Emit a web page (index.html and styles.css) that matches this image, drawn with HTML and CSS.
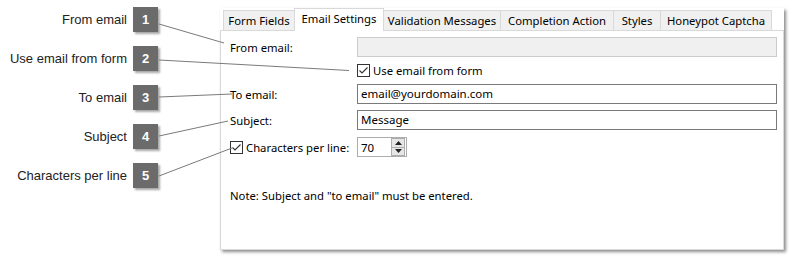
FILE: index.html
```html
<!doctype html>
<html>
<head>
<meta charset="utf-8">
<title>Email Settings</title>
<link rel="stylesheet" href="styles.css">
</head>
<body>
<div class="page">
	<div class="callouts">
		<div class="callout"><span class="callout-text">From email</span><span class="badge">1</span></div>
		<div class="callout"><span class="callout-text">Use email from form</span><span class="badge">2</span></div>
		<div class="callout"><span class="callout-text">To email</span><span class="badge">3</span></div>
		<div class="callout"><span class="callout-text">Subject</span><span class="badge">4</span></div>
		<div class="callout"><span class="callout-text">Characters per line</span><span class="badge">5</span></div>
	</div>

	<div class="window">
		<ul class="tabs">
			<li class="tab t-fields">Form Fields</li>
			<li class="tab t-email on">Email Settings</li>
			<li class="tab t-valid">Validation Messages</li>
			<li class="tab t-compl">Completion Action</li>
			<li class="tab t-styles">Styles</li>
			<li class="tab t-honey">Honeypot Captcha</li>
		</ul>
		<div class="panel">
			<div class="row">
				<label class="label">From email:</label>
				<div class="field disabled"></div>
			</div>
			<div class="row row-check">
				<span class="label"></span>
				<span class="check">
					<svg width="13" height="13" viewBox="0 0 13 13"><rect x="0.5" y="0.5" width="12" height="12" fill="#fff" stroke="#333"/><path d="M2.5 6.5 L5 9 L10.5 3.5" fill="none" stroke="#333" stroke-width="1.1"/></svg>
					Use email from form
				</span>
			</div>
			<div class="row">
				<label class="label">To email:</label>
				<div class="field">email@yourdomain.com</div>
			</div>
			<div class="row row-subject">
				<label class="label">Subject:</label>
				<div class="field">Message</div>
			</div>
			<div class="row">
				<span class="label check">
					<svg width="13" height="13" viewBox="0 0 13 13"><rect x="0.5" y="0.5" width="12" height="12" fill="#fff" stroke="#333"/><path d="M2.5 6.5 L5 9 L10.5 3.5" fill="none" stroke="#333" stroke-width="1.1"/></svg>
					Characters per line:
				</span>
				<div class="spin">
					<span class="spin-val">70</span>
					<span class="spin-btns">
						<span class="spin-btn"><svg width="7" height="4" viewBox="0 0 7 4"><path d="M0 4 L3.5 0 L7 4 Z" fill="#222"/></svg></span>
						<span class="spin-btn"><svg width="7" height="4" viewBox="0 0 7 4"><path d="M0 0 L3.5 4 L7 0 Z" fill="#222"/></svg></span>
					</span>
				</div>
			</div>
			<p class="note">Note: Subject and "to email" must be entered.</p>
		</div>
	</div>

	<svg class="leaders" width="794" height="261" viewBox="0 0 794 261">
		<g stroke="#7a7a7a" stroke-width="1" fill="none">
			<line x1="159" y1="24" x2="224" y2="43"/>
			<line x1="159" y1="60" x2="349" y2="70.5"/>
			<line x1="159" y1="97" x2="232" y2="94"/>
			<line x1="159" y1="136" x2="228" y2="121"/>
			<line x1="159" y1="176" x2="232" y2="148"/>
		</g>
	</svg>
</div>
</body>
</html>
```

FILE: styles.css
```css
*{margin:0; padding:0; list-style:none; box-sizing:border-box;}
body{background:#fff; width:794px; height:261px; overflow:hidden;}
.page{position:relative; display:flex; width:794px; height:261px;}

/* callouts on the left */
.callouts{width:220px; padding-top:7px; display:flex; flex-direction:column; gap:14px;}
.callout{display:flex; align-items:center; justify-content:flex-end; padding-right:62px; height:25px;}
.callout-text{font:13px "Liberation Sans", Arial, sans-serif; color:#222; margin-right:6px;}
.badge{width:25px; height:25px; background:#6b6b6b; color:#fff; font:bold 13px/25px "Liberation Sans", Arial, sans-serif; text-align:center; box-shadow:2px 2px 2px rgba(0,0,0,0.35);}

/* the dialog */
.window{margin-top:8px; width:564px; height:242px; background:#fff; display:flex; flex-direction:column; box-shadow:2px 2px 3px rgba(0,0,0,0.45); font:11.3px "Noto Sans", "Open Sans", sans-serif; color:#000;}
.tabs{display:flex; align-items:flex-end; height:22px; padding-left:3px; position:relative; z-index:1;}
.tab{height:20px; line-height:19px; background:#f0f0f0; border:1px solid #d9d9d9; border-bottom:none; margin-left:-1px; text-align:center; white-space:nowrap;}
.tab.on{height:23px; line-height:20px; background:#fff; margin-bottom:-1px; position:relative;}
.t-fields{width:72px; margin-left:0;}
.t-email{width:90px;}
.t-valid{width:118px;}
.t-compl{width:114px;}
.t-styles{width:48px;}
.t-honey{width:112px;}

.panel{flex:1; border:1px solid #d9d9d9; padding:6px 6px 0 9px;}
.row{display:flex; align-items:center; height:20px; margin-bottom:6px;}
.row-check{height:15px;}
.row-subject{margin-bottom:7px;}
.label{width:127px; flex:none;}
.field{flex:1; height:20px; border:1px solid #7a7a7a; padding-left:3px; line-height:18px; white-space:nowrap; font-size:11.5px;}
.field.disabled{background:#f0f0f0; border-color:#ccc;}
.check{display:flex; align-items:center; gap:3px; white-space:nowrap;}
.check svg{flex:none;}

.spin{width:50px; height:20px; border:1px solid #adadad; display:flex; align-items:center; padding-left:3px; font-size:11.5px;}
.spin-val{flex:1;}
.spin-btns{display:flex; flex-direction:column; width:14px; height:18px; margin-right:1px;}
.spin-btn{flex:1; display:flex; align-items:center; justify-content:center; background:#e6e6e6; border:1px solid #adadad;}
.spin-btn + .spin-btn{border-top:none;}

.note{margin-top:31px; line-height:16px;}

/* leader lines drawn over everything */
.leaders{position:absolute; left:0; top:0; pointer-events:none;}
```
